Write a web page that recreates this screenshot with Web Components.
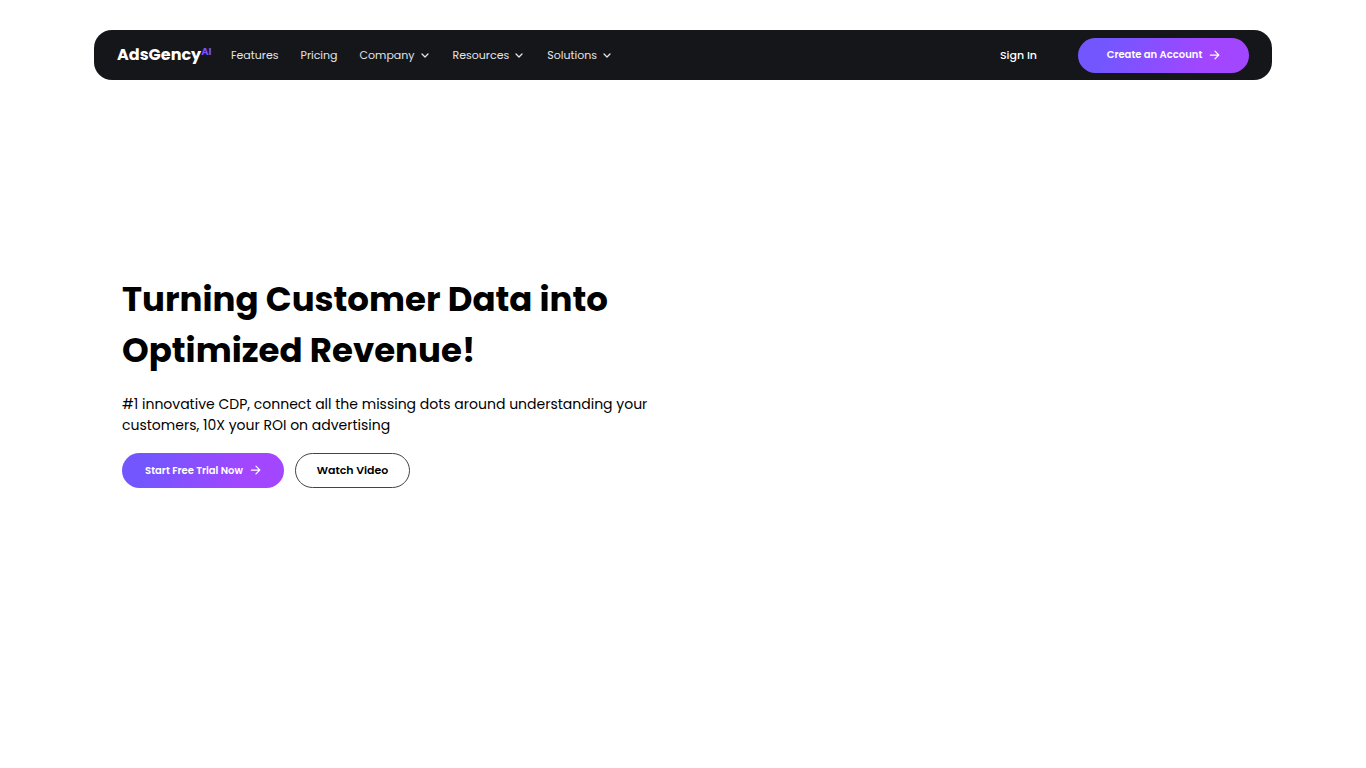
<!DOCTYPE html>
<html lang="en">
<head>
<meta charset="utf-8">
<meta name="viewport" content="width=device-width, initial-scale=1">
<title>AdsGency AI</title>
<style>
  body { margin: 0; background: #fff; color: #000; font-family: Poppins, Inter, "Open Sans", sans-serif; }
</style>
</head>
<body>
<adsgency-page></adsgency-page>

<script>
const define = (name, html) => {
  const template = document.createElement("template");
  template.innerHTML = html;
  customElements.define(name, class extends HTMLElement {
    constructor() {
      super();
      this.attachShadow({ mode: "open" }).append(template.content.cloneNode(true));
    }
  });
};

define("brand-logo", `
  <style>
    :host { display: block; width: 93px; }
    a { display: flex; align-items: flex-start; color: #fff; text-decoration: none; font-size: 16px; font-weight: 700; line-height: 24px; white-space: nowrap; }
    span { color: #7b52ff; font-size: 10px; line-height: 18px; }
  </style>
  <a href="#">AdsGency<span>AI</span></a>`);

define("nav-link", `
  <style>
    :host { display: block; }
    a { display: block; color: #e4e4e6; text-decoration: none; font-size: 11px; line-height: 18px; white-space: nowrap; }
  </style>
  <a href="#"><slot></slot></a>`);

define("nav-menu", `
  <style>
    :host { display: block; }
    button { display: flex; align-items: center; gap: 4px; padding: 0; border: 0; background: none; color: #e4e4e6; font: inherit; font-size: 11px; line-height: 18px; white-space: nowrap; }
    svg { width: 12px; height: 12px; }
  </style>
  <button type="button" aria-haspopup="true"><slot></slot>
    <svg viewBox="0 0 12 12" fill="none" stroke="currentColor" stroke-width="1.3" stroke-linecap="round" stroke-linejoin="round" aria-hidden="true"><path d="M3 5 6 8l3-3"/></svg>
  </button>`);

define("primary-button", `
  <style>
    :host { display: block; }
    button { display: flex; align-items: center; justify-content: center; gap: 7px; width: 100%; height: 35px; padding: 0; border: 0; border-radius: 18px; background: linear-gradient(107deg, #7456ff 18%, #a346ff 76%); color: #fff; font: inherit; font-size: 10px; font-weight: 600; white-space: nowrap; }
    svg { width: 11px; height: 11px; }
  </style>
  <button type="button"><slot></slot>
    <svg viewBox="0 0 12 12" fill="none" stroke="currentColor" stroke-width="1.3" stroke-linecap="round" stroke-linejoin="round" aria-hidden="true"><path d="M1.500 5.500h9M6.500 1.300 10.700 5.500 6.500 9.700"/></svg>
  </button>`);

define("outline-button", `
  <style>
    :host { display: block; }
    button { width: 100%; height: 35px; padding: 0; border: 1px solid #444; border-radius: 18px; background: #fff; color: #000; font: inherit; font-size: 11px; font-weight: 600; white-space: nowrap; }
  </style>
  <button type="button"><slot></slot></button>`);

define("site-header", `
  <style>
    :host { display: flex; align-items: center; gap: 21px; box-sizing: border-box; height: 50px; padding: 0 23px; border-radius: 18px; background: #15161a; }
    nav { display: flex; align-items: center; gap: 22px; }
    .account { display: flex; align-items: center; gap: 41px; margin-left: auto; }
    .account a { color: #fff; text-decoration: none; font-size: 11px; font-weight: 500; line-height: 18px; }
    primary-button { width: 171px; }
  </style>
  <brand-logo></brand-logo>
  <nav>
    <nav-link>Features</nav-link>
    <nav-link>Pricing</nav-link>
    <nav-menu>Company</nav-menu>
    <nav-menu>Resources</nav-menu>
    <nav-menu>Solutions</nav-menu>
  </nav>
  <div class="account">
    <a href="#">Sign In</a>
    <primary-button>Create an Account</primary-button>
  </div>`);

define("hero-section", `
  <style>
    :host { display: block; padding: 0 28px; }
    h1 { margin: 0; font-size: 34px; font-weight: 700; line-height: 51px; }
    p { margin: 18px 0 17px; font-size: 14px; line-height: 21px; }
    .actions { display: flex; gap: 11px; }
    primary-button { width: 162px; }
    outline-button { width: 115px; }
  </style>
  <h1>Turning Customer Data into<br>Optimized Revenue!</h1>
  <p>#1 innovative CDP, connect all the missing dots around understanding your<br>customers, 10X your ROI on advertising</p>
  <div class="actions">
    <primary-button>Start Free Trial Now</primary-button>
    <outline-button>Watch Video</outline-button>
  </div>`);

define("adsgency-page", `
  <style>
    :host { display: flex; flex-direction: column; box-sizing: border-box; min-height: 100vh; padding: 30px 94px; }
    main { display: flex; flex: 1; flex-direction: column; justify-content: center; padding-bottom: 56px; }
  </style>
  <site-header></site-header>
  <main><hero-section></hero-section></main>`);
</script>
</body>
</html>
